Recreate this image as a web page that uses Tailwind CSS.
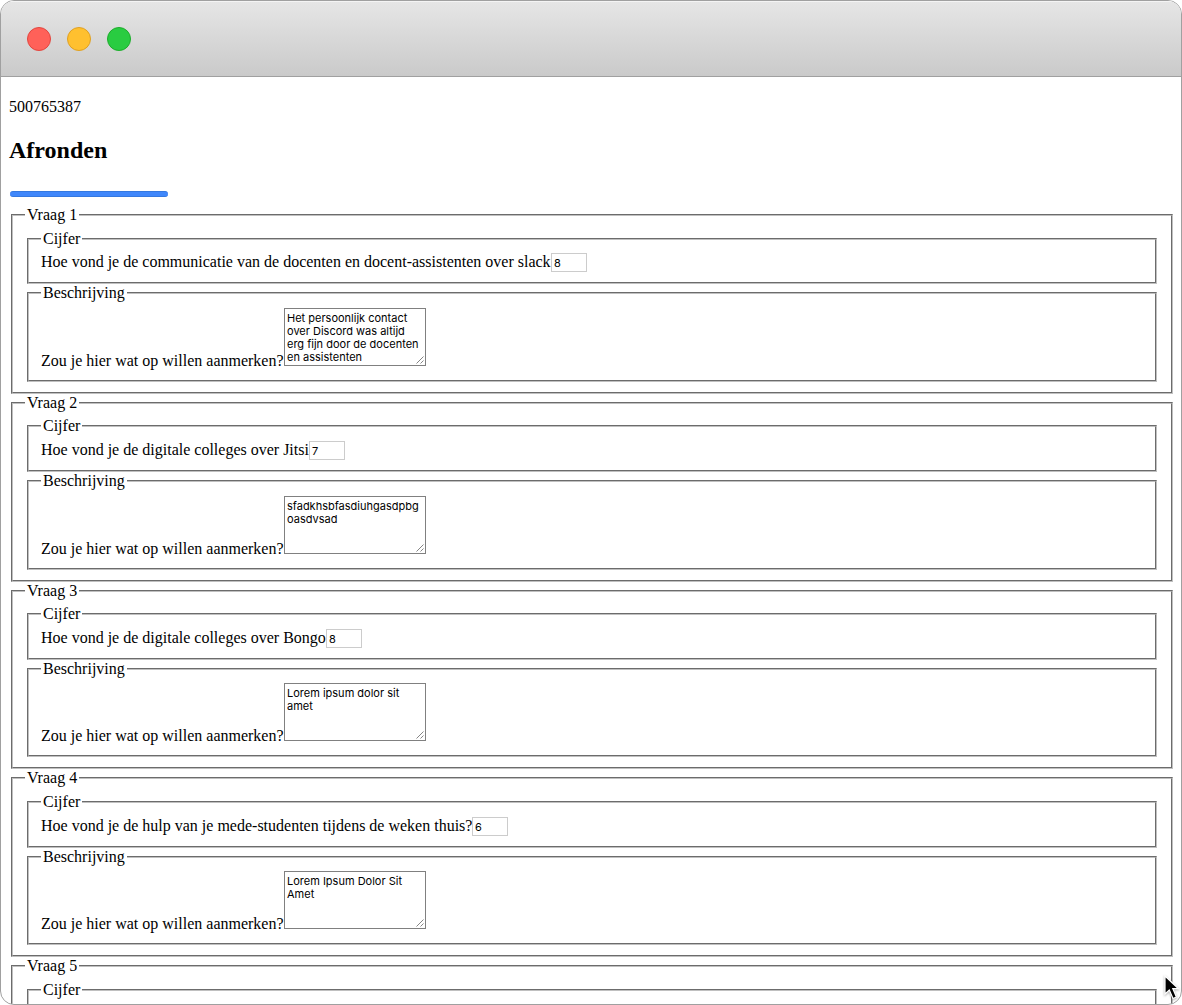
<!DOCTYPE html>
<html lang="nl">
<head>
<meta charset="utf-8">
<title>Afronden</title>
<script src="https://cdn.jsdelivr.net/npm/@tailwindcss/browser@4"></script>
</head>
<body class="bg-white text-black">
<div class="relative h-[1005px] w-[1182px] overflow-hidden rounded-[14px] border border-[#a0a0a0] bg-white font-['Liberation_Serif',serif] text-[16px] leading-[18px]">
  <header class="flex h-[76px] items-center gap-4 border-b border-[#a0a0a0] bg-linear-to-b from-[#e6e6e6] to-[#cacaca] pl-[26px] shadow-[inset_0_1px_0_#f4f4f4]">
    <span class="size-6 rounded-full border border-[#e2463f] bg-[#ff6159]"></span>
    <span class="size-6 rounded-full border border-[#dfa023] bg-[#ffc02f]"></span>
    <span class="size-6 rounded-full border border-[#1dad2b] bg-[#29cc41]"></span>
  </header>
  <main class="flex flex-col pl-2 pr-2 pt-[21px]">
    <p><span class="inline-block">500765387</span></p>
    <h1 class="mt-[20px] text-[24px] leading-[28px] font-bold"><span class="inline-block">Afronden</span></h1>
    <div class="mt-[27px] ml-px h-[6px] w-[158px] rounded-full border-y border-[#3478e0] bg-[#3f87fb]"></div>
    <form id="form" class="mt-[9px] ml-[2px] w-[1162px]"></form>
  </main>
  <svg class="absolute left-[1160px] top-[972px]" width="20" height="30" viewBox="0 0 20 30"><path d="M4 3V21L8.3 17L12 25.5L15.4 24L11.8 15.7H17.5Z" fill="#000" stroke="#fff" stroke-width="1.2" style="filter:drop-shadow(0 1px 1px #0005)"/></svg>
</div>
<script>
const questions = [
  ["Hoe vond je de communicatie van de docenten en docent-assistenten over slack", 510, "8", ["Het persoonlijk contact", "over Discord was altijd", "erg fijn door de docenten", "en assistenten"]],
  ["Hoe vond je de digitale colleges over Jitsi", 268, "7", ["sfadkhsbfasdiuhgasdpbg", "oasdvsad"]],
  ["Hoe vond je de digitale colleges over Bongo", 285, "8", ["Lorem ipsum dolor sit", "amet"]],
  ["Hoe vond je de hulp van je mede-studenten tijdens de weken thuis?", 431, "6", ["Lorem Ipsum Dolor Sit", "Amet"]],
  null
];
const frame = "min-w-0 border-2 [border-style:groove] border-[#c0c0c0]";
const grade = ([q, w, n]) => `
    <div class="flex items-start whitespace-nowrap"><label style="width:${w}px">${q}</label><span class="h-[19px] w-9 border border-[#cccccc] pl-[2px] font-[Inter,sans-serif] text-[11px] leading-[18px]">${n}</span></div>`;
const description = ([, , , lines]) => `
  <fieldset class="${frame} mx-[2px] h-[97.7px] px-3 pt-[5.65px]">
    <legend class="px-[2px]">Beschrijving</legend>
    <div class="flex items-end whitespace-nowrap"><label class="-mb-1 w-[243px]">Zou je hier wat op willen aanmerken?</label><div class="relative h-[58px] w-[142px] overflow-hidden border border-[#808080] pl-[2px] pt-[3px] font-[Inter,sans-serif] text-[11px] leading-[13px]">${lines.map(l => `<div>${l}</div>`).join("")}<svg class="absolute bottom-px right-px" width="8" height="8" viewBox="0 0 8 8"><path d="M0.5 7.5L7.5 0.5M4.5 7.5L7.5 4.5" stroke="#666" stroke-width=".8"/></svg></div></div>
  </fieldset>`;
document.getElementById("form").innerHTML = questions.map((item, i) => `
<fieldset class="${frame} h-[187.75px] px-3 pt-[5.7px]">
  <legend class="px-[2px]">Vraag ${i + 1}</legend>
  <fieldset class="${frame} mx-[2px] h-[54.6px] px-3 pt-[5.7px]">
    <legend class="px-[2px]">Cijfer</legend>${item ? grade(item) : ""}
  </fieldset>${item ? description(item) : ""}
</fieldset>`).join("");
</script>
</body>
</html>
